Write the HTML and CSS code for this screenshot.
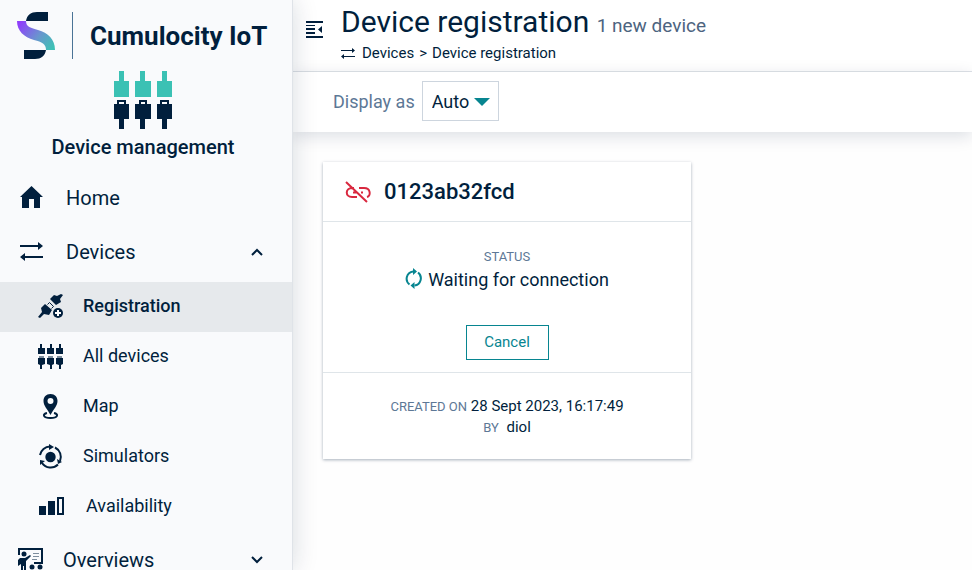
FILE: index.html
```html
<!DOCTYPE html>
<html lang="en">
<head>
<meta charset="utf-8">
<meta name="viewport" content="width=device-width, initial-scale=1">
<title>Device registration</title>
<link rel="stylesheet" href="styles.css">
</head>
<body>
<div class="app">
  <nav class="sidebar" aria-label="Main">
    <div class="brand">
      <svg class="brand-mark" viewBox="0 0 38 47" aria-hidden="true">
        <defs>
          <linearGradient id="ribbon" x1="0" y1="0.2" x2="1" y2="0.8">
            <stop offset="0" stop-color="#8f3ffb"/>
            <stop offset="0.55" stop-color="#6a94cf"/>
            <stop offset="1" stop-color="#3fc0b5"/>
          </linearGradient>
        </defs>
        <path fill="#011f3d" d="M9 9C10 3 14 0 20 0h11v9zM7 38h22c-1 6-5 9-11 9H7z"/>
        <path fill="url(#ribbon)" d="M0 9h9c0 6 5 7 12 9 10 3 17 9 17 20h-9c0-6-4-8-12-10C7 25 0 19 0 9z"/>
      </svg>
      <span class="brand-name">Cumulocity IoT</span>
    </div>
    <div class="product">
      <svg class="product-icon" viewBox="0 0 58 58" aria-hidden="true">
        <path fill="#3bc1b4" d="M5 0h5v10h5v16H0V10h5zM26 0h5v10h6v16H21V10h5zM48 0h5v10h5v16H43V10h5z"/>
        <path fill="#011f3d" fill-rule="evenodd" d="M3 29h9v4h3v15h-5v10H5V48H0V33h3zm2 2v2h5v-2zM25 29h8v4h4v15h-6v10h-5V48h-5V33h4zm2 2v2h4v-2zM46 29h9v4h3v15h-5v10h-5V48h-5V33h3zm2 2v2h5v-2z"/>
      </svg>
      <span>Device management</span>
    </div>
    <ul class="menu">
      <li><a class="item" href="#home">
        <svg class="icon" viewBox="0 0 25 25"><path d="M12.500 0L24 11h-3v11h-6v-9h-5v9H3V11H1z"/></svg>
        <span>Home</span></a></li>
      <li><a class="item" href="#devices" aria-expanded="true">
        <svg class="icon" viewBox="-1 -2 25 25"><path d="M0 3h18V0l5 4-5 4V5H0zM23 14H5v-3l-5 4 5 4v-3h18z"/></svg>
        <span>Devices</span>
        <svg class="chevron" viewBox="0 0 12 8"><path d="M1 7l5-5 5 5"/></svg></a>
        <ul class="submenu">
          <li><a class="item active" href="#registration" aria-current="page">
            <svg class="icon" viewBox="0 0 25 25"><path d="M16 1l3 1 4-2 2 1-3 4 1 3-5 3-6-6zM7 10l7 6-3 5-5-1-4 4-2-1 4-5-1-4z"/><path class="clip" d="M9.500 10.500l2-2 4 4-2 2"/><circle class="knock" cx="20" cy="19" r="6.500"/><circle cx="20" cy="19" r="5"/><path class="plus" d="M20 16v6M17 19h6"/></svg>
            <span>Registration</span></a></li>
          <li><a class="item" href="#all">
            <svg class="icon" viewBox="0 0 25 25"><path d="M2 0h2v4h3v6H0V4h2zM12 0h2v4h2v6H9V4h3zM21 0h2v4h2v6h-7V4h3zM0 14h7v6l-3 1v4H2v-4l-2-1zM9 14h7v6l-2 1v4h-2v-4l-3-1zM18 14h7v6l-2 1v4h-2v-4l-3-1z"/><path class="soft" d="M1 12h5v2H1zM10 12h5v2h-5zM19 12h5v2h-5z"/></svg>
            <span>All devices</span></a></li>
          <li><a class="item" href="#map">
            <svg class="icon" viewBox="0 0 25 25"><path fill-rule="evenodd" d="M12.500 0C8 0 5.500 3.200 5.500 7c0 5 4 8 7 14 3-6 7-9 7-14 0-3.800-2.500-7-7-7zm0 4a3 3 0 1 1 0 6 3 3 0 0 1 0-6z"/><path class="line" d="M9 19c-5 1-4 5 3.500 5s8.500-4 3.500-5"/></svg>
            <span>Map</span></a></li>
          <li><a class="item" href="#simulators">
            <svg class="icon" viewBox="0 0 25 25"><circle cx="12.500" cy="13" r="5.200"/><path class="arc" d="M2 11A10.500 10.500 0 0 1 12 2.500M17 3.500A10.500 10.500 0 0 1 22 17M20 20.500A10.500 10.500 0 0 1 4 19"/><path d="M11 0l5 3-5 3zM19 15l5 3-4 2zM2 16l5 1-5 4z"/></svg>
            <span>Simulators</span></a></li>
          <li><a class="item availability" href="#availability">
            <svg class="icon" viewBox="0 0 25 25"><path fill-rule="evenodd" d="M0 12h7v9H0zM9 7h7v14H9zM18 3h7v18h-7zm2 2v14h3V5z"/></svg>
            <span>Availability</span></a></li>
        </ul></li>
      <li><a class="item overviews" href="#overviews">
        <svg class="icon" viewBox="0 0 25 25"><path fill-rule="evenodd" d="M0 0h25v16h-9v-2h7V2H2v5H0z"/><circle cx="6" cy="6" r="2.500"/><path d="M2 10h5l5-3 1 1-5 5v12H6v-7H5v7H3v-9l-3 2v-6z"/><path class="soft" d="M15 5h6v1h-6zM15 8h6v1h-6zM14 11h5v1h-5z"/><circle cx="14" cy="19" r="2.500"/><circle cx="22" cy="19" r="2.500"/><path d="M10 25c0-4 7-4 7 0zM18 25c0-4 7-4 7 0z"/></svg>
        <span>Overviews</span>
        <svg class="chevron" viewBox="0 0 12 8"><path d="M1 1l5 5 5-5"/></svg></a></li>
    </ul>
  </nav>
  <div class="content">
    <header class="header">
      <button class="collapse" type="button" aria-label="Toggle navigation">
        <svg viewBox="0 0 17 17"><path d="M0 0h17v2H0zM0 4h9v1H0zM0 7h9v2H0zM0 11h9v2H0zM0 15h17v2H0zM16 5v7l-4-3.500z"/></svg>
      </button>
      <div class="heading">
        <h1>Device registration <small>1 new device</small></h1>
        <div class="crumbs">
          <svg viewBox="0 0 14 11"><path d="M0 2h11V0l3 2.500L11 5V3H0zM14 8H3V6L0 8.500 3 11V9h11z"/></svg>
          <a href="#devices">Devices</a><span>&gt;</span><span>Device registration</span>
        </div>
      </div>
    </header>
    <div class="toolbar">
      <label for="display">Display as</label>
      <div class="select">
        <select id="display"><option>Auto</option><option>List</option><option>Grid</option></select>
        <svg viewBox="0 0 16 8" aria-hidden="true"><path d="M0 0h16L8 8z"/></svg>
      </div>
    </div>
    <main class="main">
      <article class="card">
        <header class="card-head">
          <svg viewBox="0 0 26 22" aria-hidden="true"><path d="M9 7H7C0 7 0 16 7 16h5M14 7h5c7 0 7 8 3 9M8 11.500h4M16 11.500h2M1 1l21 20"/></svg>
          <h2>0123ab32fcd</h2>
        </header>
        <div class="card-body">
          <div class="label">STATUS</div>
          <div class="status">
            <svg viewBox="0 0 18 21" aria-hidden="true"><path class="ring" d="M4.500 16.500A7.300 7.300 0 0 1 8 3.500M13 4.500A7.300 7.300 0 0 1 9.500 17.500"/><path d="M8 0l4 3.500L8 7zM9.500 14l-4 3.500 4 3.500z"/></svg>
            <span>Waiting for connection</span>
          </div>
          <button class="cancel" type="button">Cancel</button>
        </div>
        <footer class="card-foot">
          <div><span class="label">CREATED ON</span> <span>28 Sept 2023, 16:17:49</span></div>
          <div class="by"><span class="label">BY</span> <span>diol</span></div>
        </footer>
      </article>
    </main>
  </div>
</div>
</body>
</html>
```
FILE: styles.css
```css
* { box-sizing: border-box; }
body { margin: 0; font-family: Roboto, "Liberation Sans", sans-serif; font-weight: 400; color: #011f3d; background: #fefefe; }
a { color: inherit; text-decoration: none; }
ul { list-style: none; margin: 0; padding: 0; }
svg { display: block; flex: none; fill: currentColor; }
.app { display: flex; height: 100vh; overflow: hidden; }

.sidebar { flex: none; width: 293px; padding-top: 12px; background: #f9fafc; border-right: 1px solid #dfe3e8; box-shadow: 0 0 24px rgba(1, 31, 61, 0.16); z-index: 1; }
.brand { display: flex; align-items: center; height: 47px; padding-left: 17px; }
.brand-mark { width: 38px; height: 47px; }
.brand-name { display: flex; align-items: center; height: 47px; margin-left: 17px; padding-left: 17px; border-left: 1px solid #4a7396; font-size: 26px; font-weight: 700; white-space: nowrap; }
.product { display: flex; flex-direction: column; align-items: center; margin-top: 12px; padding-right: 6px; font-size: 20px; font-weight: 500; line-height: 36px; }
.product-icon { width: 58px; height: 58px; }
.menu { margin-top: 6px; }
.item { display: flex; align-items: center; height: 54px; padding: 0 29px 0 19px; font-size: 20px; line-height: 20px; }
.icon { width: 25px; height: 25px; margin-right: 22px; }
.chevron { width: 12px; height: 8px; margin-left: auto; fill: none; stroke: currentColor; stroke-width: 2; }
.submenu { padding: 3px 0 1px; }
.submenu .item { height: 50px; padding-bottom: 2px; padding-left: 38px; font-size: 18px; }
.submenu .icon { margin-right: 20px; }
.submenu .active { background: #e6e9ec; font-weight: 500; }
.submenu .availability { gap: 2px; padding-left: 39px; }
.overviews { padding-left: 18px; }
.overviews .icon { margin-right: 20px; }
.knock { fill: #e6e9ec; }
.clip { fill: none; stroke: currentColor; stroke-width: 1; }
.plus { stroke: #ffffff; stroke-width: 2; }
.soft { opacity: 0.5; }
.line, .arc { fill: none; stroke: currentColor; stroke-width: 2; }

.content { flex: 1; min-width: 0; }
.header { display: flex; height: 72px; padding: 4px 12px 0 13px; border-bottom: 1px solid #dfe3e8; background: #ffffff; }
.collapse { flex: none; align-self: flex-start; margin: 17px 18px 0 0; padding: 0; border: 0; background: none; color: inherit; }
.collapse svg { width: 17px; height: 17px; }
h1 { margin: 0; font-size: 30px; font-weight: 400; line-height: 36px; white-space: nowrap; }
small { color: #4d6480; font-size: 19px; line-height: 20px; }
.crumbs { display: flex; align-items: center; gap: 5px; font-size: 15px; line-height: 26px; }
.crumbs svg { width: 14px; height: 11px; margin-right: 2px; }
.toolbar { display: flex; align-items: center; gap: 7px; height: 60px; padding: 0 0 2px 40px; background: #ffffff; box-shadow: 0 4px 16px rgba(1, 31, 61, 0.14); }
.toolbar label { color: #5d7896; font-size: 18px; }
.select { position: relative; }
select { appearance: none; width: 77px; height: 40px; padding: 0 26px 0 9px; border: 1px solid #cdd5de; border-radius: 0; background: #ffffff; color: inherit; font: 18px Roboto, sans-serif; }
.select svg { position: absolute; top: 17px; right: 9px; width: 16px; height: 8px; fill: #078590; pointer-events: none; }

.main { padding: 30px; }
.card { max-width: 368px; background: #ffffff; box-shadow: 0 1px 3px rgba(1, 31, 61, 0.35); }
.card-head { display: flex; align-items: center; gap: 13px; height: 60px; padding-left: 22px; border-bottom: 1px solid #dfe5e9; }
.card-head svg { width: 26px; height: 22px; fill: none; stroke: #d9283f; stroke-width: 2; }
h2 { margin: 0; font-size: 22px; font-weight: 500; }
.label { color: #5d7896; font-size: 13px; }
.card-body { display: flex; flex-direction: column; align-items: center; height: 151px; padding: 25px 0 12px; border-bottom: 1px solid #dfe5e9; }
.card-body .label { line-height: 20px; }
.status { display: flex; align-items: center; gap: 5px; font-size: 18px; line-height: 26px; }
.status svg { width: 18px; height: 21px; margin-bottom: 4px; fill: #078590; }
.status .ring { fill: none; stroke: #078590; stroke-width: 2; }
.cancel { width: 83px; height: 35px; margin-top: auto; padding-bottom: 2px; border: 1px solid #078590; background: #ffffff; color: #078590; font: 400 15px Roboto, sans-serif; }
.card-foot { padding: 23px 0 21px; font-size: 15px; line-height: 21px; text-align: center; }
.by span + span { margin-left: 4px; }
```
